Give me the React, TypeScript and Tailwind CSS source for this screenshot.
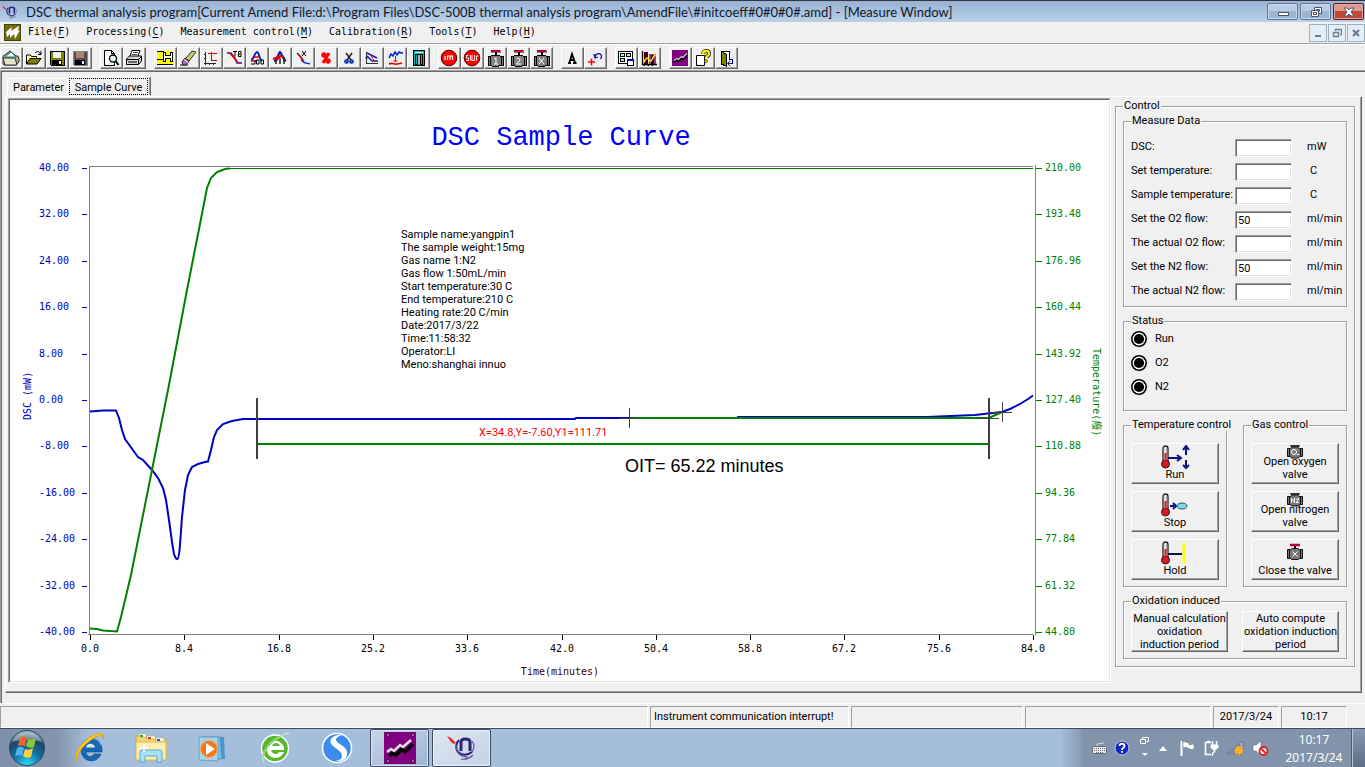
import React from "react";
import type { ReactNode } from "react";

const raised =
  "border border-t-white border-l-white border-r-[#696969] border-b-[#696969] shadow-[inset_-1px_-1px_0_#a0a0a0]";

/* ---------- toolbar icons, 18 x 18 grid ---------- */

function Icon({ children, soft = false }: { children: ReactNode; soft?: boolean }) {
  return (
    <svg viewBox="0 0 18 18" className="size-[18px]" fill="none" shapeRendering={soft ? "auto" : "crispEdges"} aria-hidden="true">
      {children}
    </svg>
  );
}

const Floppy = ({ dim = false }: { dim?: boolean }) => (
  <Icon>
    <path d="M2 2h14v14H3l-1-1z" fill={dim ? "#505050" : "#808000"} stroke={dim ? "#888" : "#000"} />
    <rect x="5" y="3" width="8" height="6" fill={dim ? "#b08070" : "#f0f0f0"} />
    <rect x="4" y="11" width="10" height="5" fill="#000" />
    <rect x="11" y="12" width="2" height="3" fill="#f0f0f0" />
  </Icon>
);

const Valve = ({ mark }: { mark: ReactNode }) => (
  <Icon>
    <rect x="5" y="1" width="9" height="2" fill="#e0003c" stroke="#400" strokeWidth=".5" />
    <path d="M9 3v4M10 3v4" stroke="#000" />
    <path d="M2 7h3l2-1h5l2 1h3v9h-3l-1 1H6l-1-1H2z" fill="#808080" stroke="#000" />
    <path d="M4 7v9M15 7v9" stroke="#000" />
    <g stroke="#fff" shapeRendering="auto">{mark}</g>
  </Icon>
);

const toolGroups: { name: string; icon: ReactNode }[][] = [
  [
    {
      name: "Open data",
      icon: (
        <Icon soft>
          <path d="M1 15V7l3-2 4-3 6 5h2l1 3v3l-3 3H2z" fill="#a8a878" stroke="#333" />
          <path d="M3 8l6-5 5 5z" fill="#fff" stroke="#088" />
          <path d="M1 9h12l2 7H3z" fill="#e4e4c8" stroke="#333" />
        </Icon>
      ),
    },
    {
      name: "Open",
      icon: (
        <Icon soft>
          <path d="M1.500 15V6h4l1 1.500h5V10" fill="#ffff9c" stroke="#000" />
          <path d="M1.500 15l3.500-5.500h11L12 15z" fill="#808000" stroke="#000" />
          <path d="M10 4c2-2 4-2 5.500 1M16 2v3.500h-3" stroke="#000" />
        </Icon>
      ),
    },
    { name: "Save", icon: <Floppy /> },
    { name: "Save as", icon: <Floppy dim /> },
  ],
  [
    {
      name: "Print preview",
      icon: (
        <Icon soft>
          <path d="M2.500 1.500h7l3 3v12h-10z" fill="#fff" stroke="#000" />
          <path d="M9.500 1.500v3h3" stroke="#000" />
          <circle cx="11" cy="9.500" r="3.500" fill="#e8ffff" stroke="#000" strokeWidth="1.300" />
          <path d="M13.500 12l3 4" stroke="#000" strokeWidth="2" />
        </Icon>
      ),
    },
    {
      name: "Print",
      icon: (
        <Icon soft>
          <path d="M5 7l2-5.500h8L13 7" fill="#fff" stroke="#000" />
          <path d="M8 3.500h5M7 5.500h5" stroke="#000" strokeWidth=".7" />
          <path d="M1.500 10l3-3h12v5l-3 3.500h-12z" fill="#d0d0d0" stroke="#000" />
          <path d="M1.500 10.500h12l3-3M13.500 10.500v5M3 13h9" stroke="#000" />
        </Icon>
      ),
    },
  ],
  [
    {
      name: "Display range",
      icon: (
        <Icon>
          <rect x="1" y="2" width="16" height="14" fill="#ff0" />
          <path d="M1 2.500h7M1 10.500h6M1 15.500h16" stroke="#000" />
          <path d="M7.500 3.500h2v3h5v-3h2v9h-2v-3h-5v3h-2z" fill="#fff" stroke="#000" />
        </Icon>
      ),
    },
    {
      name: "Erase",
      icon: (
        <Icon soft>
          <path d="M1 16h8" stroke="#000" />
          <path d="M6 10l7-8 4 1-7 9z" fill="#c8c864" stroke="#333" />
          <path d="M3 13l3-4 4 3-3 4H4z" fill="#b060c0" stroke="#222" />
          <path d="M5 10.500l4 3" stroke="#fff" />
        </Icon>
      ),
    },
    {
      name: "Coordinates",
      icon: (
        <Icon>
          <path d="M3.500 3v13M2 14.500h12M2 5.500h2M2 9.500h2M7.500 14v2M11.500 14v2" stroke="#222" />
          <path d="M6 4.500h9M9.500 3v8h5" stroke="#c00" />
        </Icon>
      ),
    },
    {
      name: "Tangent",
      icon: (
        <Icon soft>
          <path d="M2 4h4l4 5 2 5h5" stroke="#202090" strokeWidth="1.300" />
          <path d="M5 4l5 6 3 4" stroke="#e00000" strokeWidth="1.800" />
          <path d="M8 2.500h4M10 2.500v5M13.500 2.500v5h2.500v-5zM13.500 5h2" stroke="#000" />
        </Icon>
      ),
    },
    {
      name: "Peak area",
      icon: (
        <Icon soft>
          <path d="M3 11c3 0 3-7 6-8 2 0 2 7 5 9" stroke="#0018c0" strokeWidth="1.800" />
          <path d="M3 12h5M6 8h5" stroke="#e00000" strokeWidth="1.500" />
          <path d="M3 15h4v-4M8.500 11h2.500v4H8.500zM13 11h2.500v4H13z" stroke="#000" />
        </Icon>
      ),
    },
    {
      name: "Peak height",
      icon: (
        <Icon soft>
          <path d="M3 12c3 0 4-7 6-9 2 1 2 7 6 9" stroke="#0018c0" strokeWidth="2" />
          <path d="M2 10l8-3M5 12l4-5 4 1" stroke="#e00000" strokeWidth="2" />
          <path d="M5 11v4M9 9v6M13 8v7" stroke="#222" strokeWidth="1.500" />
        </Icon>
      ),
    },
    {
      name: "Extrapolate",
      icon: (
        <Icon soft>
          <path d="M3 4l4 4 1 4c3 3 5 2 8 3" stroke="#0020d0" strokeWidth="1.300" />
          <path d="M4 5l6 7" stroke="#e00000" strokeWidth="1.300" />
          <path d="M8 2l4 5M12 2L8 7" stroke="#000" />
        </Icon>
      ),
    },
    {
      name: "Percent",
      icon: (
        <Icon soft>
          <path d="M12 4L6 14" stroke="#f00" strokeWidth="3" />
          <circle cx="7" cy="6" r="2" fill="#f00" stroke="#f00" strokeWidth="1.500" />
          <circle cx="11" cy="12" r="2" fill="#f00" stroke="#f00" strokeWidth="1.500" />
        </Icon>
      ),
    },
    {
      name: "Cut",
      icon: (
        <Icon soft>
          <path d="M6 4l5 7M12 4l-5 7" stroke="#222" strokeWidth="1.500" />
          <circle cx="6.500" cy="12.500" r="1.700" fill="#4080d0" stroke="#0020b0" strokeWidth="1.300" />
          <circle cx="11.500" cy="12.500" r="1.700" fill="#4080d0" stroke="#0020b0" strokeWidth="1.300" />
        </Icon>
      ),
    },
    {
      name: "Baseline",
      icon: (
        <Icon soft>
          <path d="M3.500 3v12M3 14.500h12M2 9h3" stroke="#333" />
          <path d="M4 4l10 5M4 7l5 5h6" stroke="#0020c0" strokeWidth="1.500" />
          <path d="M7 5l5 8" stroke="#f00" />
        </Icon>
      ),
    },
    {
      name: "Smooth",
      icon: (
        <Icon soft>
          <path d="M3 9l2-4 2 2 2-4 2 3 2-3 2 1h2" stroke="#0020c0" strokeWidth="1.500" />
          <path d="M9.500 7v6M7.500 11l2 2 2-2" stroke="#f00" />
          <path d="M3 15c4-2 5 1 8 0s3 0 5-1" stroke="#e00000" strokeWidth="1.500" />
        </Icon>
      ),
    },
    {
      name: "Calculator",
      icon: (
        <Icon>
          <path d="M4 2h12v14H4z" fill="#00b8c0" />
          <path d="M4.500 1v16M15.500 1v16M4 1.500h12M4 16.500h12" stroke="#000" />
          <path d="M6 3.500h8" stroke="#f0f0a0" />
          <path d="M6.500 5v10M8.500 6v9M11.500 6v9M13.500 5v10M6 5.500h8M6 15.500h3M11 15.500h3" stroke="#000" />
          <path d="M10 6v9" stroke="#b0b0b0" strokeWidth="2" />
        </Icon>
      ),
    },
  ],
  [
    {
      name: "Measure in",
      icon: (
        <Icon soft>
          <circle cx="9" cy="9" r="7.800" fill="#f00" stroke="#500" />
          <path d="M5 7v4M7.500 11V7h2.500v4M12.500 11V7h-2.500" stroke="#fff" strokeWidth="1.200" />
        </Icon>
      ),
    },
    {
      name: "Stop",
      icon: (
        <Icon soft>
          <circle cx="9" cy="9" r="7.800" fill="#f00" stroke="#500" />
          <path d="M5.500 6.500h-2V9h2v2.500h-2.500M7.500 6v5.500M9 6v5.500h2.500V6M13.500 11.500V7h2" stroke="#ffd0d0" strokeWidth="1.100" />
        </Icon>
      ),
    },
    { name: "Valve 1", icon: <Valve mark={<path d="M8 10l2-1v6M8 15h4" />} /> },
    { name: "Valve 2", icon: <Valve mark={<path d="M7.500 10c1-1.500 4-1 3.500 1L7.500 15H12" />} /> },
    { name: "Close valves", icon: <Valve mark={<path d="M7 9l5 6M12 9l-5 6" />} /> },
  ],
  [
    {
      name: "Text",
      icon: (
        <Icon soft>
          <path d="M5 14h3M10 14h3.500M6.500 13.500L9 5l3 8.500M7.500 11H11" stroke="#000" strokeWidth="1.800" />
        </Icon>
      ),
    },
    {
      name: "Undo point",
      icon: (
        <Icon soft>
          <path d="M2 13h7M5.500 9.500v7" stroke="#f00" strokeWidth="1.600" />
          <path d="M9 8c1-5 7-4 6.500 0l-1 2M8 5l1 4 3-1" stroke="#0a1890" strokeWidth="1.300" />
        </Icon>
      ),
    },
  ],
  [
    {
      name: "Windows",
      icon: (
        <Icon>
          <rect x="1.500" y="2.500" width="14" height="12" fill="#fff" stroke="#000" />
          <path d="M3.500 4.500h4v3h-4zM9.500 4.500h4v3h-4zM3.500 9.500h4v3h-4z" fill="#a0f0f0" stroke="#000" />
          <rect x="10.500" y="10.500" width="6" height="6" fill="#fff" stroke="#000" />
          <path d="M10 11h7" stroke="#00a" strokeWidth="2" />
        </Icon>
      ),
    },
    {
      name: "Compare",
      icon: (
        <Icon soft>
          <rect x="9" y="5" width="7" height="10" fill="#904090" />
          <path d="M4 3h4v12H4zM11 6h3v9h-3z" fill="#400000" />
          <path d="M2 15c3-1 3-6 5-6s2 4 4 3 2-7 5-6" stroke="#ffe000" strokeWidth="1.500" />
          <path d="M2.500 2v13.500H17M4 17l1-2M8 17l1-2M12 17l1-2" stroke="#000" strokeWidth="1.300" />
        </Icon>
      ),
    },
  ],
  [
    {
      name: "Measure window",
      icon: (
        <Icon soft>
          <rect x="1" y="1" width="16" height="16" fill="#800080" />
          <path d="M3 13l3-2 1.500 1 3-3 1.500 1 4-4" stroke="#000" strokeWidth="2" />
          <path d="M3 11.500l3-2 1.500 1 3-3 1.500 1 4-4" stroke="#ccc" strokeWidth="1.200" />
        </Icon>
      ),
    },
    {
      name: "Help",
      icon: (
        <Icon soft>
          <path d="M2.500 6.500h8v10h-8z" fill="#fff" stroke="#000" />
          <path d="M9 5c0-4 7-4 6 0 0 2-3 2-3 4" stroke="#222" strokeWidth="4" />
          <path d="M9 5c0-4 7-4 6 0 0 2-3 2-3 4" stroke="#ffe900" strokeWidth="2.400" />
          <circle cx="12" cy="12" r="1.500" fill="#ffe900" stroke="#222" strokeWidth=".7" />
        </Icon>
      ),
    },
    {
      name: "Exit",
      icon: (
        <Icon>
          <path d="M4.500 15.500v-13h8v7" fill="#fff" stroke="#000" />
          <path d="M4 2l5 3v12l-5-2z" fill="#808000" stroke="#000" />
          <path d="M12 10c4 0 4 1 4 4M12 14.500h4M13 12l-2 2.500 2 2.500" stroke="#10108c" />
        </Icon>
      ),
    },
  ],
];

/* ---------- window chrome ---------- */

const InnuoMark = ({ className }: { className: string }) => (
  <svg viewBox="0 0 30 24" className={className} fill="none" aria-hidden="true">
    <path d="M0 0l4 2 5 5-2 1-3-2z" fill="#e8281c" />
    <path d="M14 15V6c0-4 9-4 9 0v9" stroke="#2c2478" strokeWidth="3" />
    <path d="M12 4c-3 3-4 8-1 12 3 3 9 4 14 0" stroke="#2c2478" strokeWidth="2" />
    <path d="M9 10c0 6 4 11 12 11M25 5c3 4 2 8 0 11M14 23c5 1 9-1 12-4" stroke="#5a50a0" strokeWidth="1.200" />
  </svg>
);

function CaptionGlyph({ kind, color, fill }: { kind: string; color: string; fill: string }) {
  return (
    <svg viewBox="0 0 14 12" className="h-3 w-3.5" fill={fill} stroke={color} aria-hidden="true">
      {kind === "Minimize" && <rect x="2.500" y="6.500" width="10" height="3" />}
      {kind === "Restore" && (
        <>
          <path d="M5.500 1.500h7v6h-7zM7.500 3.500h3v2h-3z" />
          <path d="M2.500 4.500h7v6h-7zM4.500 6.500h3v2h-3z" />
        </>
      )}
      {kind === "Close" && <path d="M2 2h3l2 2 2-2h3L9 6l3 4H9L7 8l-2 2H2l3-4z" />}
    </svg>
  );
}

function TitleBar() {
  return (
    <header className="flex h-[22px] items-center justify-between border-t border-[#303640] bg-linear-to-b from-[#98b2d1] to-[#bad1e9]">
      <div className="flex items-center gap-2 pl-0.5">
        <InnuoMark className="h-3.5 w-4" />
        <h1 className="text-[13px] leading-5 whitespace-nowrap text-[#101828] [font-family:Lato,'Noto_Sans',sans-serif]">
          DSC thermal analysis program[Current Amend File:d:\Program Files\DSC-500B thermal analysis
          program\AmendFile\#initcoeff#0#0#0#.amd] - [Measure Window]
        </h1>
      </div>
      <div className="flex gap-0.5 pr-px">
        {["Minimize", "Restore", "Close"].map((kind) => (
          <button
            key={kind}
            aria-label={kind}
            className={
              "flex h-[17px] w-[31px] items-center justify-center rounded-xs border " +
              (kind === "Close"
                ? "border-[#5a1a20] bg-linear-to-b from-[#dc9a90] from-50% to-[#c04a34] to-50% shadow-[inset_0_0_0_1px_#e0a8a0]"
                : "border-[#5f7591] bg-linear-to-b from-[#b9cde4] from-50% to-[#9bb6d2] to-50% shadow-[inset_0_0_0_1px_#c6d8ea]")
            }
          >
            <CaptionGlyph kind={kind} color="#4c5468" fill="#fff" />
          </button>
        ))}
      </div>
    </header>
  );
}

const menus: [string, string][] = [
  ["File", "F"],
  ["Processing", "C"],
  ["Measurement control", "M"],
  ["Calibration", "R"],
  ["Tools", "T"],
  ["Help", "H"],
];

function MenuBar() {
  return (
    <nav className="flex h-[22px] items-center justify-between border-b border-[#a0a0a0]">
      <div className="flex items-center pl-1 text-[10px] leading-4 text-black [font-family:'DejaVu_Sans_Mono',monospace]">
        <svg viewBox="0 0 17 17" className="mr-[7px] size-[17px]" aria-hidden="true">
          <rect x=".5" y=".5" width="16" height="16" fill="#6e6e10" stroke="#444408" />
          <path d="M2 8l6-5-1 4 8-5-1 5 2-1-5 9-1-5-4 4v-4l-3 3z" fill="#fff" />
        </svg>
        <div className="flex gap-4 pb-0.5">
          {menus.map(([label, key]) => (
            <button key={label} className="whitespace-nowrap">
              {label}(<u className="underline-offset-2">{key}</u>)
            </button>
          ))}
        </div>
      </div>
      <div className="flex gap-px">
        {["Minimize", "Restore", "Close"].map((kind) => (
          <button
            key={kind}
            aria-label={kind + " document"}
            className="flex size-[18px] items-center justify-center border border-[#9fb0c4] bg-[#e4eef9]"
          >
            <svg viewBox="0 0 10 10" className="size-2.5" fill="none" stroke="#6b7c90" aria-hidden="true">
              {kind === "Minimize" && <path d="M2 8h6" strokeWidth="2" />}
              {kind === "Restore" && <path d="M3.500 3V1.500h6v5H8M1.500 4.500h5v4h-5zM3 1.500h6M1 4.500h6" strokeWidth="1.300" />}
              {kind === "Close" && <path d="M2 2l6 6M8 2L2 8" strokeWidth="2.200" />}
            </svg>
          </button>
        ))}
      </div>
    </nav>
  );
}

function ToolBar() {
  return (
    <div role="toolbar" className="flex h-[26px] items-center gap-2 border-t border-white">
      {toolGroups.map((group) => (
        <div key={group[0].name} className="flex">
          {group.map((tool) => (
            <button key={tool.name} aria-label={tool.name} className={"flex h-[22px] w-[23px] items-center justify-center pr-px " + raised}>
              {tool.icon}
            </button>
          ))}
        </div>
      ))}
    </div>
  );
}

/* ---------- chart ---------- */

const ticks = [0, 1, 2, 3, 4, 5, 6, 7, 8, 9, 10];
const dscLabels = ["40.00", "32.00", "24.00", "16.00", "8.00", "0.00", "-8.00", "-16.00", "-24.00", "-32.00", "-40.00"];
const tempLabels = ["210.00", "193.48", "176.96", "160.44", "143.92", "127.40", "110.88", "94.36", "77.84", "61.32", "44.80"];
const timeLabels = ["0.0", "8.4", "16.8", "25.2", "33.6", "42.0", "50.4", "58.8", "67.2", "75.6", "84.0"];
const sampleInfo = [
  "Sample name:yangpin1",
  "The sample weight:15mg",
  "Gas name 1:N2",
  "Gas flow 1:50mL/min",
  "Start temperature:30 C",
  "End temperature:210 C",
  "Heating rate:20 C/min",
  "Date:2017/3/22",
  "Time:11:58:32",
  "Operator:LI",
  "Meno:shanghai innuo",
];

function Chart() {
  return (
    <svg viewBox="10 100 1099 581" className="block h-auto w-full bg-white" fill="none" role="img" aria-label="DSC Sample Curve">
      <text x="561" y="145" textAnchor="middle" fill="#0000ff" className="text-[27px] [font-family:'Liberation_Mono',monospace]">
        DSC Sample Curve
      </text>

      <g stroke="#808080" shapeRendering="crispEdges">
        <path d="M89.500 634V166.500H1033M88 634.500h945M1035.500 165v470" />
      </g>

      <g className="text-[10px] [font-family:'DejaVu_Sans_Mono',monospace]">
        {ticks.map((i) => {
          const y = Math.round(168 + i * 46.4);
          const x = Math.round(90 + i * 94.3);
          return (
            <g key={i}>
              <path d={`M82 ${y}.5h5`} stroke="#0000c0" />
              <text x="39" y={y + 3} fill="#0000c0">
                {dscLabels[i]}
              </text>
              <path d={`M1036 ${y}.5h6`} stroke="#008000" />
              <text x="1045" y={y + 3} fill="#008000">
                {tempLabels[i]}
              </text>
              <path d={`M${x}.5 635v5`} stroke="#000" />
              <text x={x} y="652" textAnchor="middle" fill="#000">
                {timeLabels[i]}
              </text>
            </g>
          );
        })}
        <text x="560" y="675" textAnchor="middle" fill="#400000">
          Time(minutes)
        </text>
        <text transform="translate(31 420) rotate(-90)" fill="#0000c0">
          DSC (mW)
        </text>
        <text transform="translate(1093 348) rotate(90)" fill="#008000" className="[font-family:'DejaVu_Sans_Mono','Noto_Sans_CJK_SC',monospace]">
          Temperature(癈)
        </text>
      </g>

      <g className="text-[11px] [font-family:Roboto,sans-serif]" fill="#000">
        {sampleInfo.map((line, i) => (
          <text key={line} x="401" y={238 + i * 13}>
            {line}
          </text>
        ))}
      </g>

      <path
        d="M90 411.500L97 411 103 410.500H116L119 418 122 430 125 439 130 446 138 457 143 460 152 470 158 478 163 488 166 500 169 520 172 542 174 554Q176 560 177.500 559T180 545L182 517 185 490 188 475 192 467 198 464 205 462 208 461.500 211 450 214 437 217 430 223 424 232 421 243 419H575L576 418H737L738 417H927L975 415 988 413.500 1002 412 1010 409 1020 404 1028 399 1033 395.500"
        stroke="#0000c0"
        strokeWidth="2"
      />
      <path
        d="M90 628.500L97 629 103 630.500 117 631.500 121 617 131 575 152 470 168 390 187 290 200 224 207 188 211 178 217 172 225 169 230 168.500"
        stroke="#008000"
        strokeWidth="2"
      />
      <path d="M225 168.500H1033" stroke="#008000" shapeRendering="crispEdges" />
      <path d="M258 444H989M629 418H989L1002 412" stroke="#008000" strokeWidth="2" />
      <path d="M257 398v61M989 398v61" stroke="#404040" strokeWidth="2" />
      <path d="M629.500 408v20M619 418.500h20M1002.500 402v20M992 412.500h20M979 418.500h20" stroke="#404040" />

      <text x="479" y="436" fill="#f00" className="text-[11px] [font-family:Roboto,sans-serif]">
        X=34.8,Y=-7.60,Y1=111.71
      </text>
      <text x="625" y="472" fill="#000" className="text-[18px] [font-family:'Liberation_Sans',sans-serif]">
        OIT= 65.22 minutes
      </text>
    </svg>
  );
}

/* ---------- control panel ---------- */

function Group({ title, className = "", children }: { title: string; className?: string; children: ReactNode }) {
  return (
    <fieldset className={"min-w-0 border border-[#a0a0a0] px-[7px] shadow-[1px_1px_0_#fff,inset_1px_1px_0_#fff] " + className}>
      <legend className="bg-[#f0f0f0] px-px leading-3 whitespace-nowrap">{title}</legend>
      {children}
    </fieldset>
  );
}

const fields = [
  { id: "dsc", label: "DSC:", value: "", unit: "mW" },
  { id: "set-temp", label: "Set temperature:", value: "", unit: "C" },
  { id: "sample-temp", label: "Sample temperature:", value: "", unit: "C" },
  { id: "set-o2", label: "Set the O2 flow:", value: "50", unit: "ml/min" },
  { id: "actual-o2", label: "The actual O2 flow:", value: "", unit: "ml/min" },
  { id: "set-n2", label: "Set the N2 flow:", value: "50", unit: "ml/min" },
  { id: "actual-n2", label: "The actual N2 flow:", value: "", unit: "ml/min" },
];

const Thermometer = ({ children }: { children: ReactNode }) => (
  <svg viewBox="0 0 32 24" className="h-6 w-8" fill="none" aria-hidden="true">
    <rect x="4" y="1" width="5" height="17" rx="2.500" fill="#e8e8e8" stroke="#222" strokeWidth="1.300" />
    <path d="M8 3v14" stroke="#777" />
    <circle cx="6.500" cy="19" r="4" fill="#e81020" stroke="#222" />
    <path d="M6.500 8v10" stroke="#e81020" strokeWidth="2" />
    {children}
  </svg>
);

const GasValve = ({ children, handle = false }: { children: ReactNode; handle?: boolean }) => (
  <svg viewBox="0 0 18 18" className="h-[18px] w-[18px]" fill="none" aria-hidden="true">
    {handle && <path d="M4 2h10" stroke="#c00030" strokeWidth="2.500" />}
    <path d="M9 3v4" stroke="#000" strokeWidth="2" />
    <path d="M1.500 6.500h3l2-1h5l2 1h3v9h-3l-1 1h-7l-1-1h-3z" fill="#777" stroke="#111" />
    <path d="M3.500 6.500v9M14.500 6.500v9" stroke="#111" />
    <g stroke="#fff">{children}</g>
  </svg>
);

const CroppedValve = ({ children }: { children: ReactNode }) => (
  <svg viewBox="0 0 18 14" className="h-3.5 w-[18px]" fill="none" aria-hidden="true">
    <path d="M5 2V0h8v2" fill="#555" stroke="#111" />
    <path d="M1.500 3.500h3l2-1.500h5l2 1.500h3v8h-3l-1 1.500h-7l-1-1.500h-3z" fill="#777" stroke="#111" />
    <path d="M3.500 3.500v8M14.500 3.500v8" stroke="#111" />
    <g stroke="#fff">{children}</g>
  </svg>
);

function PanelButton({ icon, children }: { icon: ReactNode; children: ReactNode }) {
  return (
    <button className={"relative flex h-[41px] w-full flex-col items-center justify-end pb-0.5 " + raised}>
      <span className="absolute top-px">{icon}</span>
      <span className="relative leading-[13px]">{children}</span>
    </button>
  );
}

function ControlPanel() {
  return (
    <aside className="w-60 shrink-0 text-[11px] text-black [font-family:Roboto,sans-serif]">
      <Group title="Control" className="pt-[3px] pb-[7px]">
        <Group title="Measure Data" className="pt-3 pb-[5px]">
          <div className="flex flex-col gap-1.5">
            {fields.map((f) => (
              <div key={f.id} className="flex h-[18px]">
                <label htmlFor={f.id} className="w-[104px] shrink-0 leading-4 whitespace-nowrap">
                  {f.label}
                </label>
                <input
                  id={f.id}
                  defaultValue={f.value}
                  className="h-[18px] w-[57px] shrink-0 border border-t-[#a0a0a0] border-r-white border-b-white border-l-[#a0a0a0] bg-white px-0.5 leading-4 shadow-[inset_1px_1px_0_#696969,inset_-1px_-1px_0_#e3e3e3]"
                />
                <span className={"shrink-0 leading-4 " + (f.unit === "C" ? "pl-[18px]" : "pl-[15px]")}>{f.unit}</span>
              </div>
            ))}
          </div>
        </Group>

        <Group title="Status" className="mt-2 pt-1 pb-[15px]">
          <ul className="flex flex-col gap-2">
            {["Run", "O2", "N2"].map((s) => (
              <li key={s} className="flex h-4 gap-2">
                <svg viewBox="0 0 16 16" className="size-4" aria-hidden="true">
                  <circle cx="8" cy="8" r="7.200" fill="#fff" stroke="#000" strokeWidth="1.600" />
                  <circle cx="8" cy="8" r="5.100" fill="#000" />
                </svg>
                <span className="leading-4">{s}</span>
              </li>
            ))}
          </ul>
        </Group>

        <div className="mt-2 grid grid-cols-2 gap-4">
          <Group title="Temperature control" className="pt-3 pb-1.5">
            <div className="flex flex-col gap-[7px]">
              <PanelButton
                icon={
                  <Thermometer>
                    <path d="M9 13h12M18 10l4 3-4 3M27 2v8M27 15v8M24 5l3-4 3 4M24 20l3 3 3-3" stroke="#101080" strokeWidth="2" />
                  </Thermometer>
                }
              >
                Run
              </PanelButton>
              <PanelButton
                icon={
                  <Thermometer>
                    <path d="M11 13h4M14 10l3 3-3 3" stroke="#101080" strokeWidth="2" />
                    <ellipse cx="23" cy="13" rx="5" ry="3" fill="#80d8d8" stroke="#1a6060" />
                  </Thermometer>
                }
              >
                Stop
              </PanelButton>
              <PanelButton
                icon={
                  <Thermometer>
                    <path d="M9 13h14" stroke="#101050" strokeWidth="2" />
                    <path d="M25 2v20" stroke="#ffff00" strokeWidth="3" />
                  </Thermometer>
                }
              >
                Hold
              </PanelButton>
            </div>
          </Group>
          <Group title="Gas control" className="pt-3 pb-1.5">
            <div className="flex flex-col gap-[7px]">
              <PanelButton
                icon={
                  <CroppedValve>
                    <circle cx="8" cy="7" r="2.500" />
                    <path d="M11 9.500h2" />
                  </CroppedValve>
                }
              >
                Open oxygen
                <br />
                valve
              </PanelButton>
              <PanelButton
                icon={
                  <CroppedValve>
                    <path d="M5.500 10V5.500l3 4V5M10 6h3l-3 3.500h3" />
                  </CroppedValve>
                }
              >
                Open nitrogen
                <br />
                valve
              </PanelButton>
              <PanelButton
                icon={
                  <span className="block pt-0.5">
                    <GasValve handle>
                      <path d="M6.500 8.500l5 5M11.500 8.500l-5 5" />
                    </GasValve>
                  </span>
                }
              >
                Close the valve
              </PanelButton>
            </div>
          </Group>
        </div>

        <Group title="Oxidation induced" className="mt-2 pt-1 pb-1.5">
          <div className="grid grid-cols-2 gap-3.5 text-center leading-[13px]">
            <button className={"h-[41px] whitespace-nowrap " + raised}>
              Manual calculation
              <br />
              oxidation
              <br />
              induction period
            </button>
            <button className={"h-[41px] whitespace-nowrap " + raised}>
              Auto compute
              <br />
              oxidation induction
              <br />
              period
            </button>
          </div>
        </Group>
      </Group>
    </aside>
  );
}

function MeasureWindow() {
  return (
    <main className="flex flex-1 flex-col border-t border-l border-[#a0a0a0] pr-[3px] pb-2.5 pl-1 shadow-[inset_1px_1px_0_#696969]">
      <div role="tablist" className="flex h-[25px] items-end text-[11px] text-black [font-family:Roboto,sans-serif]">
        <button role="tab" aria-selected="false" className="ml-0.5 h-[18px] w-[60px] rounded-t-xs border-t border-l border-white pl-0.5 leading-4">
          Parameter
        </button>
        <button
          role="tab"
          aria-selected="true"
          className="h-5 w-[84px] rounded-t-xs border border-t-white border-r-[#696969] border-b-transparent border-l-white p-px shadow-[inset_-1px_0_0_#a0a0a0]"
        >
          <span className="mr-px block h-[17px] border border-dotted border-black leading-[17px]">Sample Curve</span>
        </button>
      </div>
      <div
        role="tabpanel"
        className="flex flex-1 items-start gap-1 border border-t-white border-r-[#696969] border-b-[#696969] border-l-white pt-px pr-[6px] pl-0.5 shadow-[inset_-1px_-1px_0_#a0a0a0]"
      >
        <div className="min-w-0 flex-1 border border-t-[#a0a0a0] border-r-white border-b-white border-l-[#a0a0a0]">
          <div className="border border-t-[#696969] border-r-[#e3e3e3] border-b-[#e3e3e3] border-l-[#696969]">
            <Chart />
          </div>
        </div>
        <div className="pt-0.5">
          <ControlPanel />
        </div>
      </div>
    </main>
  );
}

/* ---------- status bar and taskbar ---------- */

function StatusBar() {
  const cell =
    "h-[22px] border border-t-[#a0a0a0] border-l-[#a0a0a0] border-r-white border-b-white leading-5 whitespace-nowrap ";
  return (
    <footer className="flex h-[25px] items-end gap-0.5 border-t border-white pr-[18px] text-[11px] text-black [font-family:Roboto,sans-serif]">
      <div className={cell + "flex-1"} />
      <div className={cell + "w-[199px] pl-[3px]"}>Instrument communication interrupt!</div>
      <div className={cell + "w-[172px]"} />
      <div className={cell + "w-[186px]"} />
      <div className={cell + "w-[66px] text-center"}>2017/3/24</div>
      <div className={cell + "w-[66px] text-center"}>10:17</div>
    </footer>
  );
}

const StartOrb = () => (
  <svg viewBox="0 0 38 38" className="size-[38px]" aria-hidden="true">
    <defs>
      <radialGradient id="orb" cx=".5" cy="1" r=".95">
        <stop offset="0" stopColor="#30e0ff" />
        <stop offset=".45" stopColor="#0f6f9f" />
        <stop offset=".8" stopColor="#1f4566" />
        <stop offset="1" stopColor="#8fa9bd" />
      </radialGradient>
    </defs>
    <circle cx="19" cy="19" r="17.500" fill="url(#orb)" stroke="#2a4a66" />
    <path d="M4 13c6-13 24-13 30 0-8-3-20-3-30 0z" fill="#fff" opacity=".35" />
    <path d="M12 9c3-2 5-1 7 0l-2 8c-2-1-4-1-7 0z" fill="#f0642c" />
    <path d="M20 10c3 1 5 1 8-1l-2 9c-3 1-5 1-8-1z" fill="#8cc83c" />
    <path d="M9 19c3-2 5-1 7 0l-2 8c-2-1-4-1-7 0z" fill="#50b0f0" />
    <path d="M17 20c3 1 5 1 8-1l-2 9c-3 1-5 1-8-1z" fill="#ffd03c" />
  </svg>
);

const ExplorerE = () => (
  <svg viewBox="0 0 32 32" className="size-8" fill="none" aria-hidden="true">
    <path d="M28 22c-3 7-9 8-14 6-8-4-8-17 0-20 8-4 16 2 15 12H13c0 5 6 6 8 2z" fill="#1668b4" stroke="#0c4480" strokeWidth=".6" />
    <path d="M13 15.500c1-5 8-5 9 0z" fill="#dce8f4" />
    <path d="M8 11C14 4 26 5 28 13" stroke="#6cc0f0" strokeWidth="1.500" opacity=".7" />
    <path d="M4 30C-1 26 6 12 17 5 25 0 32 0 30 7c1-6-7-3-12 1C8 15 2 25 4 30z" fill="#ffc81e" stroke="#d89a10" strokeWidth=".8" />
  </svg>
);

const Folders = () => (
  <svg viewBox="0 0 34 32" className="h-8 w-[34px]" aria-hidden="true">
    <path d="M2 4h9l2 3h19v21H2z" fill="#f0d878" stroke="#c8a840" />
    <path d="M5 2h7v3H5zM13 4h8v3h-8zM22 6h8v3h-8z" fill="#fff" stroke="#bba860" strokeWidth=".5" />
    <path d="M6 3h3v2H6z" fill="#28a028" />
    <path d="M14 5h3v2h-3z" fill="#e04020" />
    <path d="M23 7h3v2h-3z" fill="#2060d0" />
    <path d="M2 10h30v18H2z" fill="#fbeeb0" stroke="#d8bc60" />
    <path d="M6 30V20q0-2 2-2h18q2 0 2 2v10h-5v-6H11v6z" fill="#a8e0f8" stroke="#58a8d0" />
    <path d="M10 12v8M6 16h8" stroke="#fff" strokeWidth="1.500" />
  </svg>
);

const Player = () => (
  <svg viewBox="0 0 32 32" className="size-8" aria-hidden="true">
    <path d="M10 5h17l1 22H11z" fill="#4898c8" />
    <path d="M6 5h17l2 22H7z" fill="#80c0e4" stroke="#3c88b8" strokeWidth=".7" />
    <path d="M2 5h19v24L2 28z" fill="#a4d4ec" stroke="#5098c0" strokeWidth=".8" />
    <circle cx="12" cy="17" r="8.500" fill="#f07818" stroke="#fcb070" />
    <path d="M9 11l9 6-9 6z" fill="#fff" />
  </svg>
);

const GreenE = () => (
  <svg viewBox="0 0 32 32" className="size-8" fill="none" aria-hidden="true">
    <circle cx="16" cy="16.500" r="13.500" fill="#58b82c" stroke="#fff" strokeWidth="1.500" />
    <path d="M25 20c-3 8-15 8-17-1-1-9 9-14 15-7 2 2 2 4 2 6H12c1 5 7 5 8 2z" fill="#fff" />
    <path d="M13 14c1-4 7-4 8 0z" fill="#58b82c" />
    <path d="M5 31c-5-6 1-18 14-26 5-3 10-5 11-3 0-2-5 0-10 4C10 12 2 22 5 31z" fill="#50b828" stroke="#e8ffe0" strokeWidth=".6" />
  </svg>
);

const Sogou = () => (
  <svg viewBox="0 0 32 32" className="size-8" aria-hidden="true">
    <circle cx="16" cy="16" r="14.500" fill="#3c8cf0" stroke="#fff" strokeWidth="1.500" />
    <path d="M21 3c-9-1-15 5-9 11 4 4 9 5 9 10 0 3-3 5-7 4 9 4 16-5 10-12-4-4-10-6-9-9 1-2 3-3 6-4z" fill="#fff" />
  </svg>
);

const AnalysisApp = () => (
  <svg viewBox="0 0 32 32" className="size-8" fill="none" aria-hidden="true">
    <rect width="32" height="32" fill="#800080" />
    <path d="M3 2h2v2H3zM28 2h2v2h-2zM3 28h2v2H3zM28 28h2v2h-2z" fill="#fff" stroke="#000" strokeWidth=".6" />
    <path d="M5 24l4-3 3 2 6-6 3 3 8-8" stroke="#000" strokeWidth="3.500" />
    <path d="M3 20l4-3 3 2 6-6 3 2 8-7" stroke="#e0e0e0" strokeWidth="2.500" />
  </svg>
);

const pinned: { name: string; icon: ReactNode }[] = [
  { name: "Internet Explorer", icon: <ExplorerE /> },
  { name: "Windows Explorer", icon: <Folders /> },
  { name: "Media Player", icon: <Player /> },
  { name: "360 Browser", icon: <GreenE /> },
  { name: "Sogou Browser", icon: <Sogou /> },
];

function Tray() {
  return (
    <div className="flex items-center text-white">
      <button aria-label="Keyboard" className="mr-1.5">
        <svg viewBox="0 0 16 14" className="h-3.5 w-4" fill="none" aria-hidden="true">
          <path d="M5 5V3l7-1" stroke="#ddd" />
          <rect x=".5" y="5.500" width="14" height="7" rx="1" fill="#eee" stroke="#667" />
          <path d="M2 7.500h11M2 9.500h11M4 11.500h7" stroke="#667" strokeDasharray="1 1" />
        </svg>
      </button>
      <button aria-label="Language help" className="mr-2.5">
        <svg viewBox="0 0 16 16" className="size-4" fill="none" aria-hidden="true">
          <circle cx="8" cy="8" r="7" fill="#1028c0" stroke="#c8d0e0" />
          <path d="M5.500 6c0-3 5-3 5 0 0 2-2.500 1.500-2.500 4M8 11v1.800" stroke="#fff" strokeWidth="1.800" />
        </svg>
      </button>
      <span className="mr-2.5 flex flex-col items-center gap-2 pb-1">
        <svg viewBox="0 0 9 8" className="h-2 w-[9px]" fill="none" stroke="#fff" aria-hidden="true">
          <path d="M2.500 2.500v-2h6v4h-2M.5 2.500h5v4h-5z" />
        </svg>
        <svg viewBox="0 0 6 3" className="h-[3px] w-1.5" fill="#fff" aria-hidden="true">
          <path d="M0 0h6L3 3z" />
        </svg>
      </span>
      <button aria-label="Show hidden icons" className="mr-3">
        <svg viewBox="0 0 8 5" className="h-[5px] w-2" fill="#fff" aria-hidden="true">
          <path d="M0 5l4-5 4 5z" />
        </svg>
      </button>
      <button aria-label="Action center" className="mr-2">
        <svg viewBox="0 0 16 16" className="size-4" fill="none" aria-hidden="true">
          <path d="M2.500 1v15" stroke="#fff" strokeWidth="2" />
          <path d="M4 2c3-1 4 1 6 1v2l5-1v5c-3 1-4 0-6-1s-3-1-5 0z" fill="#fff" stroke="#566" strokeWidth=".4" />
        </svg>
      </button>
      <button aria-label="Power" className="mr-2">
        <svg viewBox="0 0 16 16" className="size-4" fill="none" stroke="#fff" aria-hidden="true">
          <path d="M8 2.500H2.500v12H8M4 1.500h3" strokeWidth="1.600" />
          <path d="M9.500 1v4M13.500 1v4M11.500 9v2.500l-2 2V16" strokeWidth="1.500" />
          <path d="M8 5h7v2.500l-2 2h-3l-2-2z" fill="#fff" />
        </svg>
      </button>
      <button aria-label="Network" className="mr-2">
        <svg viewBox="0 0 17 16" className="h-4 w-[17px]" aria-hidden="true">
          <path d="M1 12h2v2H1zM4 10h2v4H4zM7 8h2v6H7zM10 5h2v9h-2zM13 2h3v12h-3z" fill="#b0b8c4" stroke="#445" strokeWidth=".5" />
          <circle cx="12" cy="10.500" r="3.500" fill="#ffb020" />
          <path d="M12 5.500v10M7 10.500h10M8.500 7l7 7M15.500 7l-7 7" stroke="#ffb020" strokeWidth="1.200" />
        </svg>
      </button>
      <button aria-label="Volume muted" className="mr-4">
        <svg viewBox="0 0 17 16" className="h-4 w-[17px]" fill="none" aria-hidden="true">
          <path d="M1 5h3l5-4v14l-5-4H1z" fill="#fff" stroke="#667" strokeWidth=".6" />
          <circle cx="11.500" cy="11" r="4" fill="#fff" stroke="#e02020" strokeWidth="1.800" />
          <path d="M9 8.500l5 5" stroke="#e02020" strokeWidth="1.800" />
        </svg>
      </button>
      <div className="mr-2 w-[58px] pt-0.5 text-center text-[12px] leading-[18px] whitespace-nowrap [font-family:'Noto_Sans',sans-serif]">
        10:17
        <br />
        2017/3/24
      </div>
      <button
        aria-label="Show desktop"
        className="h-[38px] w-3.5 border-l border-[#4c5a70] bg-linear-to-b from-[#8898b0] to-[#5c6d86] shadow-[inset_1px_0_0_#b8c4d4]"
      />
    </div>
  );
}

function Taskbar() {
  return (
    <nav
      aria-label="Taskbar"
      className="flex h-[39px] items-center justify-between border-t border-[#3c4c64] bg-[linear-gradient(to_right,#7f90a8_0,#8394ac_56px,#a5bedb_90px,#a5bedb_1060px,#8294ac_1085px)]"
    >
      <div className="flex items-center">
        <button aria-label="Start" className="ml-2 mr-3">
          <StartOrb />
        </button>
        {pinned.map((app) => (
          <button key={app.name} aria-label={app.name} className="flex w-[62px] justify-center">
            {app.icon}
          </button>
        ))}
        <button
          aria-label="Thermal analysis"
          className="ml-0.5 flex h-[38px] w-[59px] items-center justify-center rounded-xs border border-[#3c4c64] bg-linear-to-br from-[#c8d6e8] to-[#9cb4d2] shadow-[inset_0_0_0_1px_#dbe6f2]"
        >
          <AnalysisApp />
        </button>
        <button
          aria-label="DSC thermal analysis program"
          className="ml-[3px] flex h-[38px] w-[59px] items-center justify-center rounded-xs border border-[#3c4c64] bg-linear-to-br from-[#dfe7f1] to-[#c3d2e6] shadow-[inset_0_0_0_1px_#eef3f9]"
        >
          <InnuoMark className="h-6 w-[30px]" />
        </button>
      </div>
      <Tray />
    </nav>
  );
}

export default function App() {
  return (
    <div className="flex min-h-screen flex-col bg-[#f0f0f0]">
      <TitleBar />
      <MenuBar />
      <ToolBar />
      <MeasureWindow />
      <StatusBar />
      <Taskbar />
    </div>
  );
}
